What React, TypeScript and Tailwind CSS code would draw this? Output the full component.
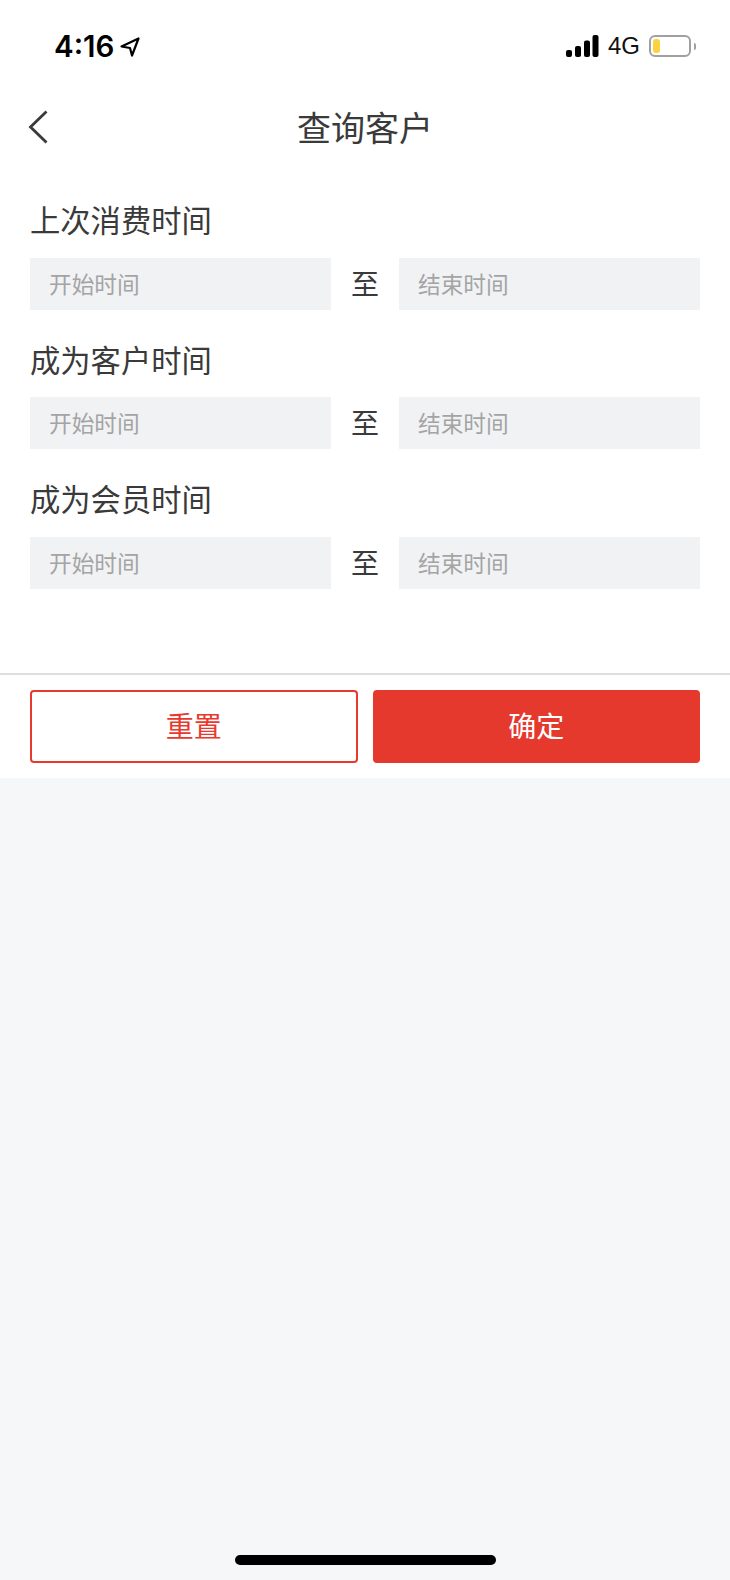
import React from "react";

const cjk = "font-['Liberation_Sans','Noto_Sans_CJK_SC',sans-serif]";

function Field({ label }: { label: string }) {
  return (
    <section className="flex flex-col">
      <div className="h-[87.5px] flex items-center pt-[17px] text-[30.3px] leading-none text-[#3a3a3a]">{label}</div>
      <div className="flex items-center">
        <div className="w-[301px] h-[52px] bg-[#f1f2f4] flex items-center pl-[19px] pt-[3px] text-[22.7px] leading-none text-[#a4a4a4]">开始时间</div>
        <div className="flex-1 text-center pt-[4px] text-[28px] leading-none text-[#3a3a3a]">至</div>
        <div className="w-[301px] h-[52px] bg-[#f1f2f4] flex items-center pl-[19px] pt-[3px] text-[22.7px] leading-none text-[#a4a4a4]">结束时间</div>
      </div>
    </section>
  );
}

export default function App() {
  return (
    <div className={`${cjk} w-[730px] h-[1580px] bg-[#f6f7f9] flex flex-col overflow-hidden`}>
      <div className="bg-white flex flex-col">
        <header className="h-[88px] flex items-start justify-between pt-[32px] pl-[54px] pr-[34px]">
          <div className="flex items-center gap-[6px] h-[28px] pt-[1px] text-black">
            <span className="font-['Inter',sans-serif] font-semibold text-[29.5px] leading-none">4:16</span>
            <svg width="20" height="20" viewBox="0 0 20 20" fill="none" stroke="#000" strokeWidth="2.2" strokeLinejoin="round">
              <path d="M1.5 9.5 18.5 1.5 12 18.5 10 11z" />
            </svg>
          </div>
          <div className="flex items-center h-[28px]">
            <svg width="33" height="22" viewBox="0 0 33 22" fill="#000">
              <rect x="0" y="15" width="6" height="7" rx="2" />
              <rect x="9" y="11" width="6" height="11" rx="2" />
              <rect x="18" y="5.5" width="6" height="16.5" rx="2" />
              <rect x="26.5" y="0" width="6" height="22" rx="2" />
            </svg>
            <span className="ml-[9px] font-['Liberation_Sans',sans-serif] text-[24px] leading-none text-[#111111]">4G</span>
            <div className="ml-[9px] w-[42px] h-[22px] rounded-[6px] border-2 border-[#a0a0a0] p-[2px]">
              <div className="w-[7px] h-full rounded-[3px] bg-[#fbd23f]" />
            </div>
            <div className="ml-[3px] w-[2px] h-[7px] rounded-r-full bg-[#a0a0a0]" />
          </div>
        </header>

        <nav className="relative h-[80px] flex items-center justify-center">
          <svg className="absolute left-[27px] top-[21px]" width="22" height="36" viewBox="0 0 22 36" fill="none" stroke="#3a3a3a" strokeWidth="2.8">
            <path d="M19.5 2.5 3.5 18 19.5 33.5" />
          </svg>
          <h1 className="pt-[2px] text-[34px] leading-none font-normal text-[#3a3a3a]">查询客户</h1>
        </nav>

        <main className="px-[30px] mt-[2px]">
          <Field label="上次消费时间" />
          <Field label="成为客户时间" />
          <Field label="成为会员时间" />
        </main>

        <div className="mt-[84px] h-[2px] bg-[#dedede]" />
        <footer className="flex gap-[15px] p-[15px] px-[30px]">
          <button className="flex-1 h-[73px] pt-[3px] rounded-[4px] border-2 border-[#e8392e] bg-white text-[#e8392e] text-[28px] leading-none">重置</button>
          <button className="flex-1 h-[73px] pt-[3px] rounded-[4px] border-2 border-[#e6392e] bg-[#e6392e] text-white text-[28px] leading-none">确定</button>
        </footer>
      </div>
      <div className="mt-auto mb-[15px] self-center ml-[1px] w-[261px] h-[10px] rounded-full bg-black" />
    </div>
  );
}
